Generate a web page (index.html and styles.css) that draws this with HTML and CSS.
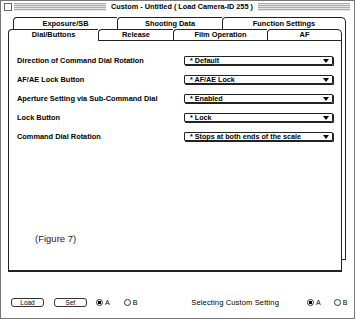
FILE: index.html
```html
<!DOCTYPE html>
<html>
<head>
<meta charset="utf-8">
<link rel="stylesheet" href="styles.css">
</head>
<body>
<div class="window">
  <div class="titlebar">
    <span class="closebox"></span>
    <span class="stripes"></span>
    <span class="title">Custom - Untitled ( Load Camera-ID 255 )</span>
    <span class="stripes"></span>
  </div>
  <div class="back">
    <div class="row1">
      <div class="tab t1">Exposure/SB</div>
      <div class="tab t2">Shooting Data</div>
      <div class="tab t3">Function Settings</div>
    </div>
    <div class="backbody">
      <div class="front">
        <div class="row2">
          <div class="tab f1 active">Dial/Buttons</div>
          <div class="tab f2">Release</div>
          <div class="tab f3">Film Operation</div>
          <div class="tab f4">AF</div>
        </div>
        <div class="panel">
          <div class="rows">
            <div class="label">Direction of Command Dial Rotation</div>
            <div class="popup"><span>* Default</span><i class="arrow"></i></div>
            <div class="label">AF/AE Lock Button</div>
            <div class="popup"><span>* AF/AE Lock</span><i class="arrow"></i></div>
            <div class="label">Aperture Setting via Sub-Command Dial</div>
            <div class="popup"><span>* Enabled</span><i class="arrow"></i></div>
            <div class="label">Lock Button</div>
            <div class="popup"><span>* Lock</span><i class="arrow"></i></div>
            <div class="label">Command Dial Rotation</div>
            <div class="popup"><span>* Stops at both ends of the scale</span><i class="arrow"></i></div>
          </div>
          <div class="figure">(Figure 7)</div>
        </div>
      </div>
    </div>
  </div>
  <div class="bottom">
    <span class="btn b-load">Load</span>
    <span class="btn b-set">Set</span>
    <span class="radio on first"></span><span class="rlabel">A</span>
    <span class="radio second"></span><span class="rlabel">B</span>
    <span class="selecting">Selecting Custom Setting</span>
    <span class="radio on"></span><span class="rlabel">A</span>
    <span class="radio second wide"></span><span class="rlabel">B</span>
  </div>
</div>
</body>
</html>
```

FILE: styles.css
```css
html, body {
  margin: 0;
  padding: 0;
  background: #fff;
}
body {
  font-family: "Liberation Sans", Arial, sans-serif;
  color: #000;
}
.window {
  box-sizing: border-box;
  width: 355px;
  height: 319px;
  border: 1px solid #777;
  background: #fff;
  overflow: hidden;
}
.titlebar {
  display: flex;
  align-items: center;
  height: 11px;
  padding: 0 2px;
}
.closebox {
  width: 6px;
  height: 6px;
  border: 1px solid #666;
  margin-left: 1px;
  flex: none;
}
.stripes {
  flex: 1;
  height: 8px;
  margin: 0 2px;
  background: repeating-linear-gradient(to bottom, #aaa 0 1px, #e6e6e6 1px 2px);
}
.title {
  font-weight: bold;
  font-size: 7.3px;
  padding: 0 3px;
  white-space: nowrap;
  line-height: 11px;
}
.back {
  margin: 5px 0 0 12px;
  width: 333px;
}
.row1 {
  display: flex;
  height: 12px;
}
.tab {
  box-sizing: border-box;
  font-weight: bold;
  font-size: 7.4px;
  text-align: center;
  border-top: 1px solid #222;
  border-left: 1px solid #222;
  border-top-left-radius: 4px;
  white-space: nowrap;
  background: #fff;
}
.row1 .tab {
  line-height: 11px;
}
.t1 { width: 104px; }
.t2 { width: 105px; }
.t3 { width: 124px; border-right: 1px solid #222; border-top-right-radius: 5px; }
.backbody {
  box-sizing: border-box;
  height: 231px;
  border-right: 1px solid #222;
  border-bottom: 1px solid #222;
}
.front {
  margin-left: -5px;
  width: 334px;
}
.row2 {
  display: flex;
  height: 11px;
}
.row2 .tab {
  line-height: 10px;
  height: 11px;
}
.row2 .tab.active {
  height: 12px;
  position: relative;
  z-index: 1;
}
.f1 { width: 90px; }
.f2 { width: 75px; }
.f3 { width: 94px; }
.f4 { width: 75px; border-right: 1px solid #222; border-top-right-radius: 5px; }
.panel {
  box-sizing: border-box;
  height: 232px;
  border: 1px solid #222;
  border-bottom: 2px solid #222;
  background: #fff;
  display: flex;
  flex-direction: column;
  padding: 10px 8px 25px 8px;
}
.rows {
  display: grid;
  grid-template-columns: 1fr 149px;
  grid-auto-rows: 19px;
  align-items: center;
}
.label {
  font-weight: bold;
  font-size: 7.4px;
  white-space: nowrap;
}
.popup {
  box-sizing: border-box;
  height: 9px;
  border: 1px solid #222;
  border-radius: 1px;
  box-shadow: 1px 1px 0 #222;
  display: flex;
  align-items: center;
  justify-content: space-between;
  padding: 0 3px 0 5px;
  font-weight: bold;
  font-size: 7.2px;
  white-space: nowrap;
}
.arrow {
  width: 0;
  height: 0;
  border-left: 3.5px solid transparent;
  border-right: 3.5px solid transparent;
  border-top: 4px solid #000;
}
.figure {
  margin-top: auto;
  margin-left: 18px;
  font-size: 9.5px;
  line-height: 12px;
  color: #222;
}
.bottom {
  display: flex;
  align-items: center;
  margin-top: 37px;
  padding-left: 10px;
  height: 10px;
  font-size: 7px;
  white-space: nowrap;
}
.bottom > * {
  flex: none;
}
.btn {
  box-sizing: border-box;
  height: 9px;
  border: 1px solid #333;
  border-radius: 3px;
  line-height: 7px;
  text-align: center;
  font-size: 6.5px;
}
.b-load { width: 33px; }
.b-set { width: 33px; margin-left: 10px; }
.radio {
  box-sizing: border-box;
  width: 7px;
  height: 7px;
  border: 1px solid #333;
  border-radius: 50%;
  margin-left: 8px;
}
.radio.on {
  background: radial-gradient(circle, #000 0 1.6px, #fff 1.8px);
}
.radio.first { margin-left: 9px; }
.radio.second { margin-left: 14px; }
.radio.second.wide { margin-left: 13px; }
.rlabel {
  margin-left: 2px;
  font-size: 7px;
}
.selecting {
  margin-left: 54px;
  margin-right: 20px;
  font-size: 7.6px;
  letter-spacing: 0.1px;
}
```
